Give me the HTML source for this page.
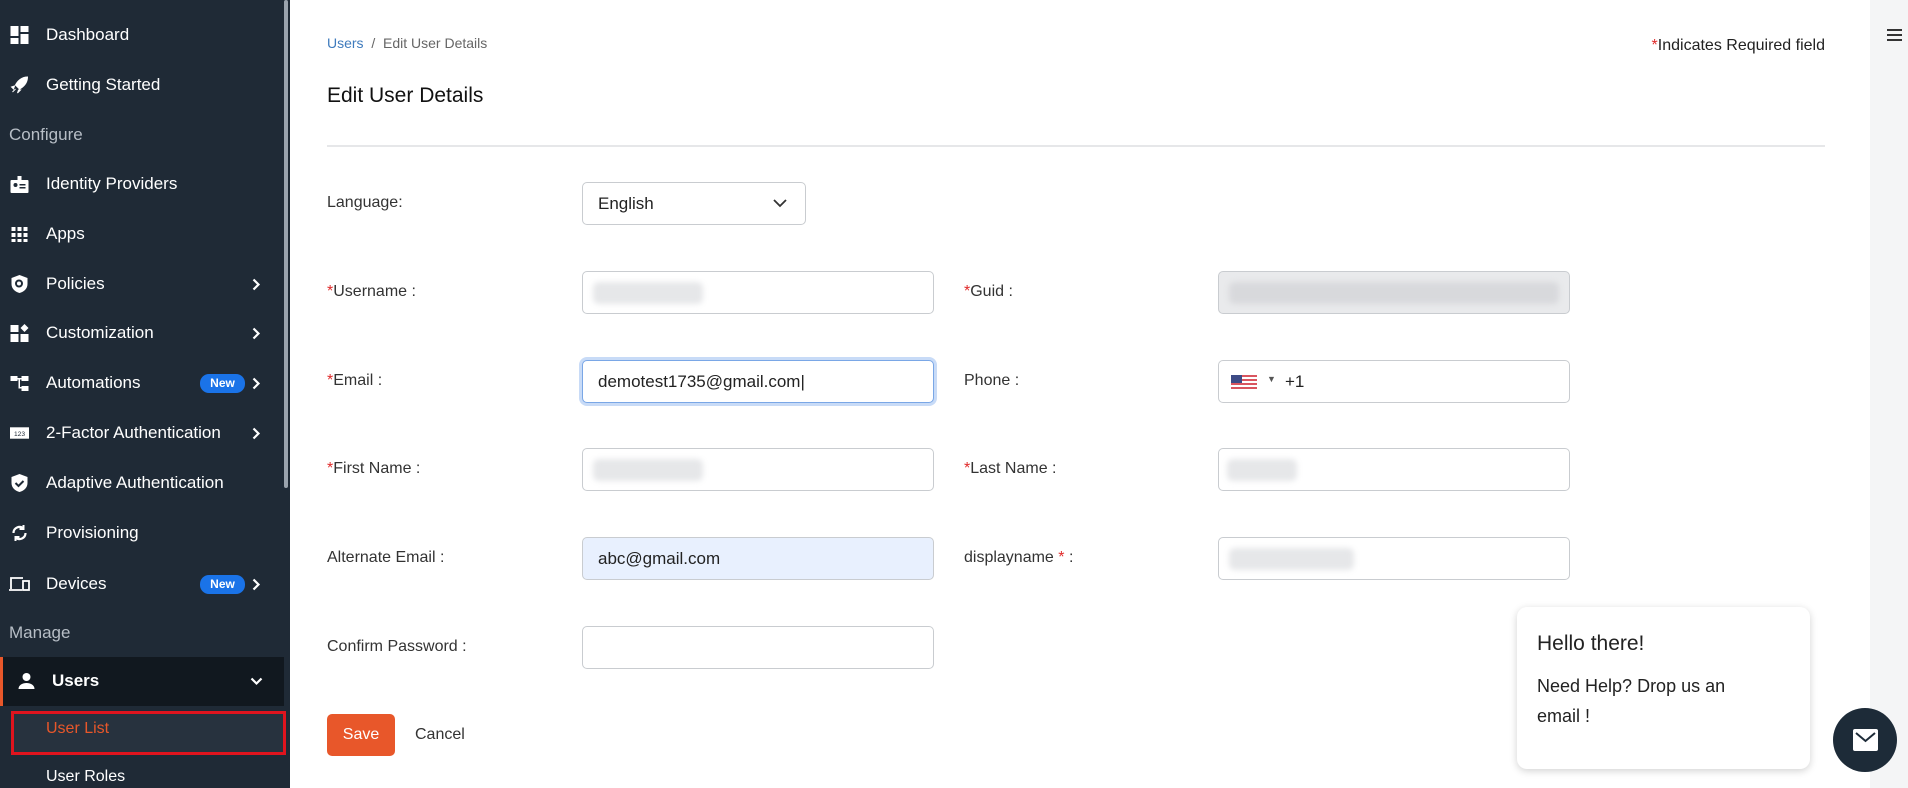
<!DOCTYPE html>
<html><head><meta charset="utf-8"><style>
*{box-sizing:border-box;margin:0;padding:0}
body{width:1908px;height:788px;overflow:hidden;background:#fff;font-family:"Liberation Sans",sans-serif;position:relative;color:#222}
.sb{position:absolute;left:0;top:0;width:290px;height:788px;background:#1f2a36}
.sbar{position:absolute;left:284px;top:0;width:4px;height:488px;background:#9aa3ad;border-radius:2px}
.it{position:absolute;left:0;width:284px;height:40px;color:#fff;font-size:17px;line-height:40px}
.it .ic{position:absolute;left:10px;top:11px;width:19px;height:18px}
.it .tx{position:absolute;left:46px}
.it .ch{position:absolute;left:252px;top:14px;width:9px;height:13px}
.sec{position:absolute;left:9px;color:#b7bec6;font-size:17px}
.new{position:absolute;left:200px;top:11px;width:45px;height:19px;background:#1a73e8;border-radius:9px;font-size:12px;font-weight:bold;line-height:19px;text-align:center}
.lbl{position:absolute;font-size:16px;color:#333}
.r{color:#e02a2a}
.inp{position:absolute;height:43px;border:1px solid #c9ccd0;border-radius:5px;background:#fff;font-size:17px;line-height:41px;padding-left:15px;color:#222}
.blur{position:absolute;top:10px;height:22px;background:#e6e7e9;border-radius:6px;filter:blur(3px)}
</style></head><body>
<div class="sb">
<div class="sbar"></div>
<div class="it" style="top:15px"><svg class="ic" viewBox="0 0 18 18"><rect x="0" y="0" width="8" height="10" fill="#fff"/><rect x="10" y="0" width="8" height="6" fill="#fff"/><rect x="0" y="12" width="8" height="6" fill="#fff"/><rect x="10" y="8" width="8" height="10" fill="#fff"/></svg><span class="tx">Dashboard</span></div>
<div class="it" style="top:65px"><svg class="ic" viewBox="0 0 18 18"><path d="M17 1C11 1 7 5 5 9l4 4c4-2 8-6 8-12zM4 10l-3 1 2 2zM8 14l-1 3 3-3zM2 16l3-3" fill="#fff" stroke="#fff"/></svg><span class="tx">Getting Started</span></div>
<div class="sec" style="top:125px">Configure</div>
<div class="it" style="top:164px"><svg class="ic" viewBox="0 0 18 18"><rect x="0" y="5" width="18" height="13" rx="1" fill="#fff"/><rect x="7" y="1" width="4" height="5" fill="#fff"/><circle cx="5" cy="10" r="2" fill="#1f2a36"/><rect x="9" y="9" width="6" height="1.5" fill="#1f2a36"/><rect x="9" y="12" width="6" height="1.5" fill="#1f2a36"/></svg><span class="tx">Identity Providers</span></div>
<div class="it" style="top:214px"><svg class="ic" viewBox="0 0 18 18" fill="#fff"><rect x="1" y="2" width="4" height="4"/><rect x="7" y="2" width="4" height="4"/><rect x="13" y="2" width="4" height="4"/><rect x="1" y="8" width="4" height="4"/><rect x="7" y="8" width="4" height="4"/><rect x="13" y="8" width="4" height="4"/><rect x="1" y="14" width="4" height="3"/><rect x="7" y="14" width="4" height="3"/><rect x="13" y="14" width="4" height="3"/></svg><span class="tx">Apps</span></div>
<div class="it" style="top:264px"><svg class="ic" viewBox="0 0 18 18"><path d="M9 0l8 3v6c0 5-4 8-8 9-4-1-8-4-8-9V3z" fill="#fff"/><circle cx="8.5" cy="8.5" r="3" fill="none" stroke="#1f2a36" stroke-width="2"/></svg><span class="tx">Policies</span><svg class="ch" viewBox="0 0 9 13"><path d="M1.5 1.5l5 5-5 5" fill="none" stroke="#fff" stroke-width="2.2"/></svg></div>
<div class="it" style="top:313px"><svg class="ic" viewBox="0 0 18 18" fill="#fff"><rect x="0" y="1" width="8" height="7"/><rect x="0" y="10" width="8" height="8"/><rect x="10" y="10" width="8" height="8"/><path d="M14 0l4 4-4 4-4-4z"/></svg><span class="tx">Customization</span><svg class="ch" viewBox="0 0 9 13"><path d="M1.5 1.5l5 5-5 5" fill="none" stroke="#fff" stroke-width="2.2"/></svg></div>
<div class="it" style="top:363px"><svg class="ic" viewBox="0 0 18 18" fill="#fff"><rect x="0" y="2" width="7" height="5"/><rect x="11" y="2" width="7" height="5"/><rect x="11" y="12" width="7" height="5"/><rect x="7" y="4" width="4" height="1.5"/><rect x="8" y="4" width="1.5" height="10"/><rect x="8" y="13" width="4" height="1.5"/></svg><span class="tx">Automations</span><span class="new">New</span><svg class="ch" viewBox="0 0 9 13"><path d="M1.5 1.5l5 5-5 5" fill="none" stroke="#fff" stroke-width="2.2"/></svg></div>
<div class="it" style="top:413px"><svg class="ic" viewBox="0 0 20 18"><rect x="0" y="3" width="20" height="12" fill="#fff"/><text x="10" y="12" font-size="7" text-anchor="middle" fill="#1f2a36" font-family="Liberation Sans">123</text></svg><span class="tx">2-Factor Authentication</span><svg class="ch" viewBox="0 0 9 13"><path d="M1.5 1.5l5 5-5 5" fill="none" stroke="#fff" stroke-width="2.2"/></svg></div>
<div class="it" style="top:463px"><svg class="ic" viewBox="0 0 18 18"><path d="M9 0l8 3v6c0 5-4 8-8 9-4-1-8-4-8-9V3z" fill="#fff"/><path d="M5 9l3 3 5-5" fill="none" stroke="#1f2a36" stroke-width="2"/></svg><span class="tx">Adaptive Authentication</span></div>
<div class="it" style="top:513px"><svg class="ic" viewBox="0 0 18 18" fill="none" stroke="#fff" stroke-width="2.2"><path d="M3 9a6 6 0 0 1 10-4.5M15 9a6 6 0 0 1-10 4.5"/><path d="M13 1v4h-4M5 17v-4h4" stroke-width="2"/></svg><span class="tx">Provisioning</span></div>
<div class="it" style="top:564px"><svg class="ic" viewBox="0 0 22 18" fill="none" stroke="#fff" stroke-width="1.8" style="width:22px;left:8px"><path d="M3 14V3h12M1 15h13"/><rect x="15" y="6" width="6" height="9"/></svg><span class="tx">Devices</span><span class="new">New</span><svg class="ch" viewBox="0 0 9 13"><path d="M1.5 1.5l5 5-5 5" fill="none" stroke="#fff" stroke-width="2.2"/></svg></div>
<div class="sec" style="top:623px">Manage</div>
<div style="position:absolute;left:0;top:657px;width:284px;height:49px;background:#11181f;border-left:3px solid #e8572a"></div>
<div class="it" style="top:661px;font-weight:bold"><svg class="ic" viewBox="0 0 18 18" style="left:17px"><circle cx="9" cy="5" r="4" fill="#fff"/><path d="M1 17c0-4 4-6 8-6s8 2 8 6z" fill="#fff"/></svg><span class="tx" style="left:52px">Users</span><svg style="position:absolute;left:250px;top:16px" width="13" height="9" viewBox="0 0 13 9"><path d="M1.5 1.5l5 5 5-5" fill="none" stroke="#fff" stroke-width="2.2"/></svg></div>
<div style="position:absolute;left:11px;top:711px;width:275px;height:44px;border:3px solid #e0141e;background:#27323e"></div>
<div style="position:absolute;left:46px;top:720px;color:#e8572a;font-size:16px">User List</div>
<div style="position:absolute;left:46px;top:768px;color:#fff;font-size:16px">User Roles</div>
</div>

<div style="position:absolute;left:1870px;top:0;width:38px;height:788px;background:#f4f5f6"></div>
<div style="position:absolute;left:1887px;top:29px;width:15px;"><div style="height:2px;background:#333;margin-bottom:3px"></div><div style="height:2px;background:#333;margin-bottom:3px"></div><div style="height:2px;background:#333"></div></div>

<div style="position:absolute;left:327px;top:35px;font-size:14px;color:#666"><span style="color:#3f7bbd">Users</span> &nbsp;/&nbsp; Edit User Details</div>
<div style="position:absolute;right:83px;top:37px;font-size:16px;color:#222"><span class="r">*</span>Indicates Required field</div>
<div style="position:absolute;left:327px;top:84px;font-size:21px;color:#111">Edit User Details</div>
<div style="position:absolute;left:327px;top:145px;width:1498px;height:2px;background:#e6e7e9"></div>

<div class="lbl" style="left:327px;top:194px">Language:</div>
<div class="inp" style="left:582px;top:182px;width:224px;height:43px">English<svg style="position:absolute;right:18px;top:16px" width="14" height="9" viewBox="0 0 14 9"><path d="M1 1l6 6 6-6" fill="none" stroke="#333" stroke-width="1.8"/></svg></div>

<div class="lbl" style="left:327px;top:283px"><span class="r">*</span>Username :</div>
<div class="inp" style="left:582px;top:271px;width:352px"><div class="blur" style="left:10px;width:110px"></div></div>
<div class="lbl" style="left:964px;top:283px"><span class="r">*</span>Guid :</div>
<div class="inp" style="left:1218px;top:271px;width:352px;background:#e9eaec"><div class="blur" style="left:10px;width:330px;background:#d8d9dc"></div></div>

<div class="lbl" style="left:327px;top:372px"><span class="r">*</span>Email :</div>
<div class="inp" style="left:582px;top:360px;width:352px;border:1.5px solid #7aa7e6;box-shadow:0 0 0 3px #c8dbf7">demotest1735@gmail.com<span style="font-weight:normal">|</span></div>
<div class="lbl" style="left:964px;top:372px">Phone :</div>
<div class="inp" style="left:1218px;top:360px;width:352px"><svg style="position:absolute;left:12px;top:14px" width="26" height="15" viewBox="0 0 26 15"><rect width="26" height="15" fill="#fff"/><g fill="#d9555f"><rect y="0" width="26" height="2"/><rect y="4" width="26" height="2"/><rect y="8" width="26" height="2"/><rect y="12" width="26" height="2"/></g><rect width="11" height="8" fill="#3d4b86"/></svg><span style="position:absolute;left:48px;top:-2px;font-size:9px;color:#555">▼</span><span style="position:absolute;left:66px">+1</span></div>

<div class="lbl" style="left:327px;top:460px"><span class="r">*</span>First Name :</div>
<div class="inp" style="left:582px;top:448px;width:352px"><div class="blur" style="left:10px;width:110px"></div></div>
<div class="lbl" style="left:964px;top:460px"><span class="r">*</span>Last Name :</div>
<div class="inp" style="left:1218px;top:448px;width:352px"><div class="blur" style="left:8px;width:70px"></div></div>

<div class="lbl" style="left:327px;top:549px">Alternate Email :</div>
<div class="inp" style="left:582px;top:537px;width:352px;background:#e8f0fe">abc@gmail.com</div>
<div class="lbl" style="left:964px;top:549px">displayname <span class="r">*</span> :</div>
<div class="inp" style="left:1218px;top:537px;width:352px"><div class="blur" style="left:10px;width:125px"></div></div>

<div class="lbl" style="left:327px;top:638px">Confirm Password :</div>
<div class="inp" style="left:582px;top:626px;width:352px"></div>

<div style="position:absolute;left:327px;top:714px;width:68px;height:42px;background:#e8572a;border-radius:5px;color:#fff;font-size:16px;line-height:42px;text-align:center">Save</div>
<div class="lbl" style="left:415px;top:726px">Cancel</div>

<div style="position:absolute;left:1517px;top:607px;width:293px;height:162px;background:#fff;border-radius:10px;box-shadow:0 2px 8px rgba(0,0,0,0.18)">
<div style="position:absolute;left:20px;top:25px;font-size:21px;color:#222">Hello there!</div>
<div style="position:absolute;left:20px;top:64px;font-size:18px;color:#222;line-height:30px">Need Help? Drop us an<br>email !</div>
</div>
<div style="position:absolute;left:1833px;top:708px;width:64px;height:64px;border-radius:50%;background:#1d2b38"></div>
<svg style="position:absolute;left:1853px;top:729px" width="25" height="22" viewBox="0 0 25 22"><rect width="25" height="22" rx="2" fill="#fff"/><path d="M3 4l9.5 8L22 4" fill="none" stroke="#1d2b38" stroke-width="2"/></svg>
</body></html>
